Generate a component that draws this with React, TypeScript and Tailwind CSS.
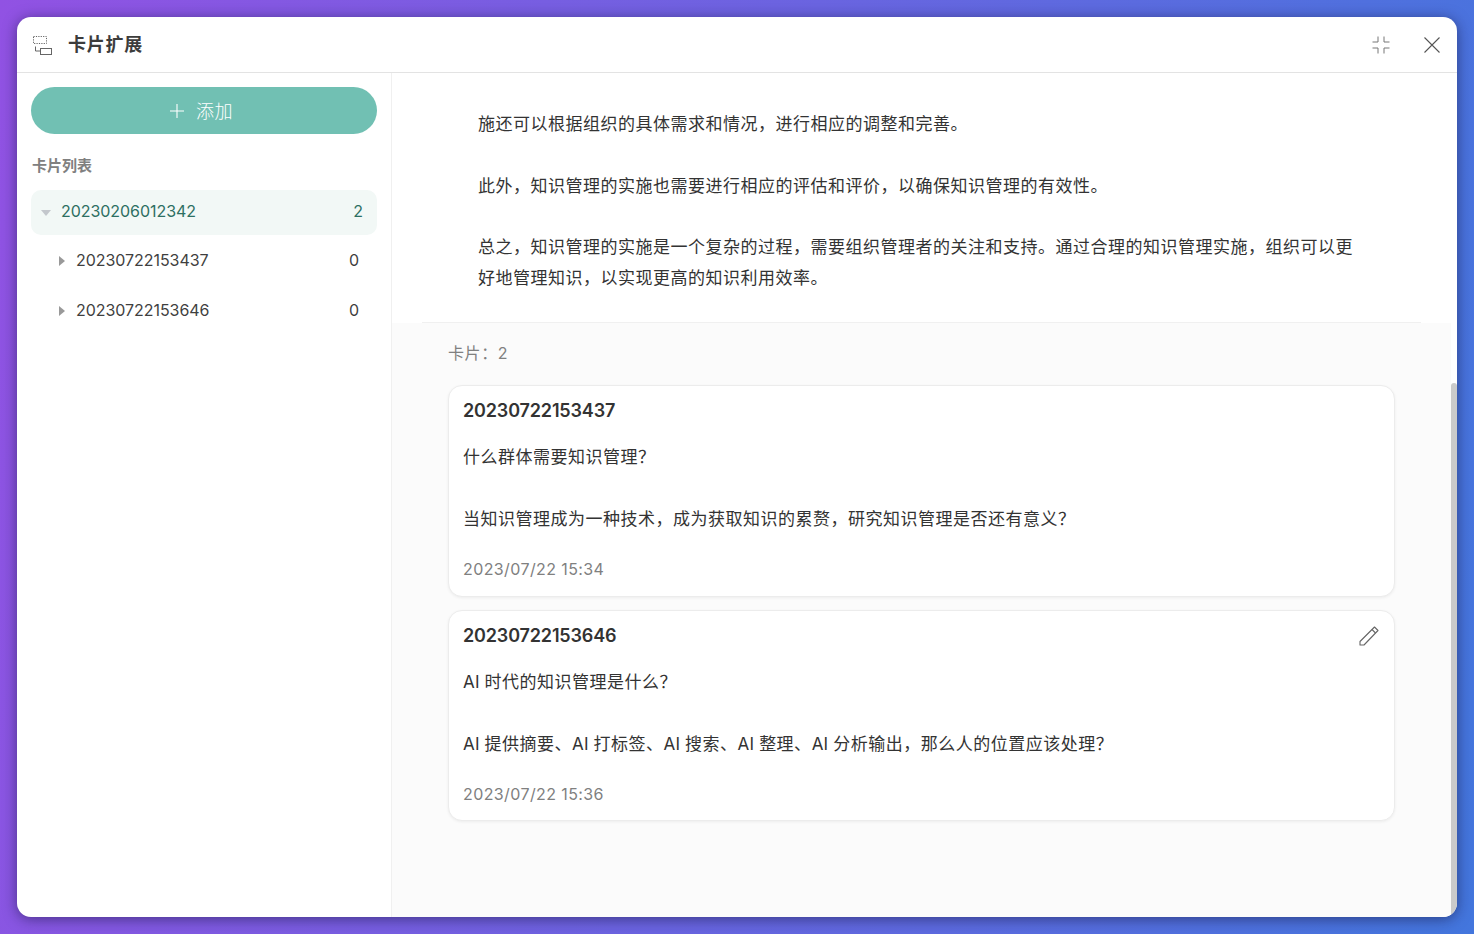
export default function App() {
  const font = { fontFamily: 'Inter, "Noto Sans CJK SC", sans-serif' };
  return (
    <div style={font} className="w-full h-[934px] overflow-hidden p-[17px] bg-linear-[100deg] from-[#9152e3] to-[#4376dd]">
      <div className="relative w-[1440px] h-[900px] bg-white rounded-[14px] overflow-hidden shadow-[0_2px_14px_rgba(20,20,60,0.55)] flex flex-col text-[#333]">
        <header className="h-[56px] shrink-0 border-b border-[#e3e3e3] flex items-center">
          <svg className="ml-[15px]" width="22" height="22" viewBox="0 0 22 22" fill="none" stroke="#666" strokeWidth="1">
            <rect x="1.5" y="2.5" width="13" height="7" strokeDasharray="1.2 1.2" />
            <rect x="8.5" y="14.5" width="11" height="6" />
            <path d="M3.5 12.5v4.5H8.5" />
          </svg>
          <h1 className="ml-[14px] text-[18px] tracking-[0.75px] leading-[24px] font-semibold text-[#3c3c3c]">卡片扩展</h1>
          <div className="ml-auto flex items-center">
            <svg width="20" height="20" viewBox="0 0 20 20" fill="none" stroke="#777" strokeWidth="1">
              <path d="M7 1.5v5.5H1.5M13 1.5v5.5h5.5M7 18.5v-5.5H1.5M13 18.5v-5.5h5.5" />
            </svg>
            <svg className="ml-[32px] mr-[16px]" width="18" height="18" viewBox="0 0 18 18" fill="none" stroke="#555" strokeWidth="1.1">
              <path d="M1.5 1.5l15 15M16.5 1.5l-15 15" />
            </svg>
          </div>
        </header>
        <div className="flex-1 flex min-h-0">
          <aside className="w-[375px] shrink-0 border-r border-[#f0f0f0] px-[14px] pt-[14px]">
            <button className="w-full h-[47px] rounded-full bg-[#71c0b3] text-white flex items-center justify-center gap-[11px] text-[18px] tracking-[0.5px] pr-[6px]">
              <svg width="16" height="16" viewBox="0 0 16 16" fill="none" stroke="#fff" strokeWidth="1.1">
                <path d="M8 1v14M1 8h14" />
              </svg>
              <span className="font-light pt-[2px]">添加</span>
            </button>
            <div className="mt-[22px] ml-[1px] text-[15px] leading-[20px] font-semibold text-[#808080]">卡片列表</div>
            <div className="mt-[14px] h-[45px] rounded-[10px] bg-[#f2f8f6] flex items-center pl-[10px] pr-[14px] text-[#2d6f62]">
              <svg width="10" height="6" viewBox="0 0 10 6" fill="#c3c7cc"><path d="M0 0h10L5 6z" /></svg>
              <span className="ml-[10px] text-[16px] tracking-[-0.05px] pb-[4px]">20230206012342</span>
              <span className="ml-auto text-[16px] pb-[4px]">2</span>
            </div>
            {["20230722153437", "20230722153646"].map((t, i) => (
              <div key={t} className={`h-[45px] flex items-center pl-[28px] pr-[18px] ${i === 0 ? "mt-[3px]" : "mt-[5px]"}`}>
                <svg width="6" height="10" viewBox="0 0 6 10" fill="#999"><path d="M0 0v10l6-5z" /></svg>
                <span className="ml-[11px] text-[16px] tracking-[-0.05px] text-[#3f3f3f] pb-[2px]">{t}</span>
                <span className="ml-auto text-[16px] text-[#3f3f3f] pb-[2px]">0</span>
              </div>
            ))}
          </aside>
          <main className="relative flex-1 flex flex-col min-w-0">
            <article className="ml-[30px] mr-[36px] pl-[56px] pr-[63px] pt-[36px] pb-[28px] border-b border-[#f0f0f0] text-[17px] tracking-[0.5px] leading-[30.8px] text-[#333]">
              <p>施还可以根据组织的具体需求和情况，进行相应的调整和完善。</p>
              <p className="mt-[30.8px]">此外，知识管理的实施也需要进行相应的评估和评价，以确保知识管理的有效性。</p>
              <p className="mt-[30.8px]">总之，知识管理的实施是一个复杂的过程，需要组织管理者的关注和支持。通过合理的知识管理实施，组织可以更好地管理知识，以实现更高的知识利用效率。</p>
            </article>
            <section className="flex-1 mr-[6px] bg-[#fbfbfb] pl-[56px] pr-[56px]">
              <div className="pt-[18px] text-[16px] tracking-[0.6px] leading-[24px] text-[#808080]">卡片：2</div>
              <Card
                className="mt-[20px] h-[212px]"
                title="20230722153437"
                q="什么群体需要知识管理？"
                a="当知识管理成为一种技术，成为获取知识的累赘，研究知识管理是否还有意义？"
                date="2023/07/22 15:34"
              />
              <Card
                className="mt-[13px] h-[211px]"
                edit
                title="20230722153646"
                q={<><Ai />时代的知识管理是什么？</>}
                a={<><Ai />提供摘要、<Ai />打标签、<Ai />搜索、<Ai />整理、<Ai />分析输出，那么人的位置应该处理？</>}
                date="2023/07/22 15:36"
              />
            </section>
            <div className="absolute right-0 top-[310px] bottom-0 w-[6px] rounded-t-[4px] bg-[#cacaca]" />
          </main>
        </div>
      </div>
    </div>
  );
}

function Ai() {
  return <span className="tracking-[0.15px]">AI </span>;
}

function Card({ title, q, a, date, edit, className }: { title: string; q: React.ReactNode; a: React.ReactNode; date: string; edit?: boolean; className: string }) {
  return (
    <div className={`relative rounded-[14px] bg-white border border-[#ececec] shadow-[0_1px_3px_rgba(0,0,0,0.06)] px-[14px] pt-[13.5px] ${className}`}>
      <div className="text-[18px] tracking-[-0.15px] leading-[24px] font-semibold text-[#333]">{title}</div>
      <div className="mt-[19px] text-[17px] tracking-[0.5px] leading-[30.8px] text-[#333]">
        <p>{q}</p>
        <p className="mt-[31.3px]">{a}</p>
      </div>
      <div className="mt-[21.5px] text-[16px] tracking-[0.4px] leading-[24px] text-[#808080]">{date}</div>
      {edit && (
        <svg className="absolute right-[15px] top-[15px]" width="20" height="20" viewBox="0 0 20 20" fill="none" stroke="#666" strokeWidth="1.1" strokeLinejoin="round">
          <path d="M1 15.5L14.5 2l1-1 3.5 3.5-1 1L5 19H1z" />
          <path d="M13 3.5L16.5 7" />
        </svg>
      )}
    </div>
  );
}
